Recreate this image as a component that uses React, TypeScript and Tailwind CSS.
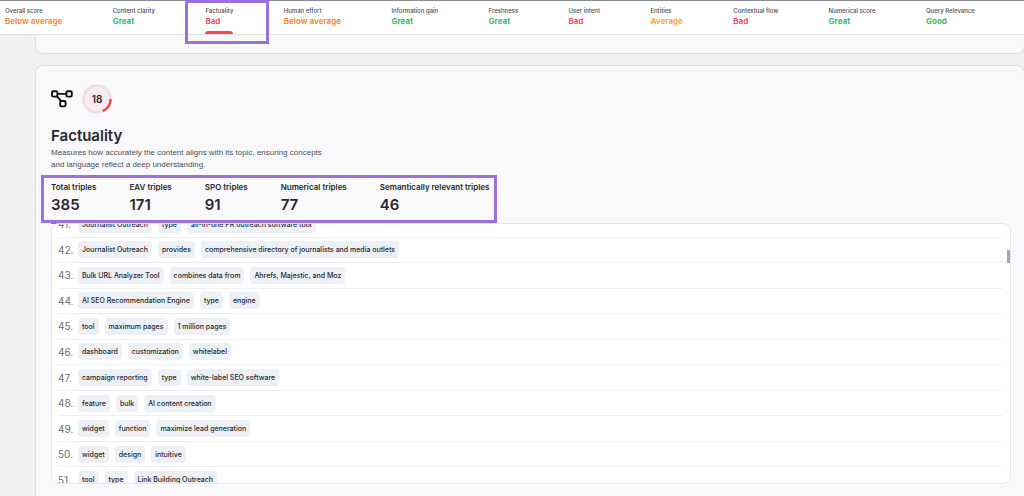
const scores = [
  { label: "Overall score", value: "Below average", color: "text-[#fb8c3c]" },
  { label: "Content clarity", value: "Great", color: "text-[#2cc25f]" },
  { label: "Factuality", value: "Bad", color: "text-[#f5505a]", active: true },
  { label: "Human effort", value: "Below average", color: "text-[#fb8c3c]" },
  { label: "Information gain", value: "Great", color: "text-[#2cc25f]" },
  { label: "Freshness", value: "Great", color: "text-[#2cc25f]" },
  { label: "User intent", value: "Bad", color: "text-[#f5505a]" },
  { label: "Entities", value: "Average", color: "text-[#f5a93b]" },
  { label: "Contextual flow", value: "Bad", color: "text-[#f5505a]" },
  { label: "Numerical score", value: "Great", color: "text-[#2cc25f]" },
  { label: "Query Relevance", value: "Good", color: "text-[#2cc25f]" },
];

const stats = [
  { label: "Total triples", value: 385, active: true },
  { label: "EAV triples", value: 171 },
  { label: "SPO triples", value: 91 },
  { label: "Numerical triples", value: 77 },
  { label: "Semantically relevant triples", value: 46 },
];

const triples = [
  ["Journalist Outreach", "type", "all-in-one PR outreach software tool"],
  ["Journalist Outreach", "provides", "comprehensive directory of journalists and media outlets"],
  ["Bulk URL Analyzer Tool", "combines data from", "Ahrefs, Majestic, and Moz"],
  ["AI SEO Recommendation Engine", "type", "engine"],
  ["tool", "maximum pages", "1 million pages"],
  ["dashboard", "customization", "whitelabel"],
  ["campaign reporting", "type", "white-label SEO software"],
  ["feature", "bulk", "AI content creation"],
  ["widget", "function", "maximize lead generation"],
  ["widget", "design", "intuitive"],
  ["tool", "type", "Link Building Outreach"],
];

function ScoreBar() {
  return (
    <nav className="flex h-[35px] shrink-0 justify-between border-t border-b border-t-[#8b8e90] border-b-[#dedfe1] bg-white pr-[49px] pl-[5px]">
      {scores.map((s) => (
        <a key={s.label} href="#factuality" className="relative block pt-[6px] whitespace-nowrap">
          <span className="block text-[6px] leading-[8px] font-medium text-[#4a4d52]">{s.label}</span>
          <span className={`block text-[8px] leading-[12px] font-bold ${s.color}`}>{s.value}</span>
          {s.active && (
            <>
              <span className="absolute inset-x-0 bottom-0 h-[3px] rounded-t-sm bg-[#f54848]" />
              <span className="pointer-events-none absolute -top-px -right-9 -bottom-[10px] -left-5 z-10 border-3 border-[#9a6fe0]" />
            </>
          )}
        </a>
      ))}
    </nav>
  );
}

function TripleIcon() {
  return (
    <svg width="22" height="18" viewBox="0 0 22 18" fill="none" stroke="#0d0e10" strokeWidth="1.9" aria-hidden="true">
      <rect x="1" y="1.2" width="5.4" height="5.4" rx="1.3" />
      <rect x="15.4" y="1.2" width="5.4" height="5.4" rx="1.3" />
      <rect x="9.2" y="11" width="5.4" height="5.4" rx="1.3" />
      <path d="M6.4 3.9h9M5.8 6.2l4.4 5" />
    </svg>
  );
}

function ScoreRing() {
  return (
    <svg width="30" height="30" viewBox="0 0 30 30" role="img" aria-label="Score 18">
      <circle cx="15" cy="15" r="13.5" fill="#faeced" stroke="#e8dfec" strokeWidth="2.4" />
      <path d="M28.5 15A13.5 13.5 0 0 1 20.8 27.2" fill="none" stroke="#f54848" strokeWidth="2.4" />
      <text x="15" y="18.6" textAnchor="middle" fontSize="10" fontWeight="600" fill="#26282c">
        18
      </text>
    </svg>
  );
}

export default function App() {
  return (
    <div className="flex h-screen flex-col overflow-hidden bg-[#f0f0f2] font-['Inter',sans-serif] text-[#26282c]">
      <ScoreBar />
      <main className="-mr-px flex flex-col gap-[11px] pl-[35px]">
        <div className="h-[19px] rounded-b-lg border border-t-0 border-[#dfe0e3] bg-[#f8f9fb]" />
        <section
          id="factuality"
          className="flex flex-col rounded-t-lg border border-b-0 border-[#dfe0e3] bg-[#f9f9fb] pt-[18px] pr-[13px] pb-8 pl-[15px]"
        >
          <div className="flex items-center gap-[9px]">
            <TripleIcon />
            <ScoreRing />
          </div>
          <h2 className="mt-[13px] text-[15px] leading-[18px] font-semibold">Factuality</h2>
          <p className="mt-[2px] font-['Liberation_Sans',sans-serif] text-[8px] leading-[12px] text-[#4c5058]">
            Measures how accurately the content aligns with its topic, ensuring concepts
            <br />
            and language reflect a deep understanding.
          </p>
          <div className="relative mt-[11px] flex gap-[33px] self-start whitespace-nowrap">
            {stats.map((s) => (
              <button key={s.label} type="button" className="relative block text-left">
                <span className="block text-[8px] leading-[10px] font-semibold">{s.label}</span>
                <span className="mt-[4px] block text-[15px] leading-[18px] font-semibold">{s.value}</span>
                {s.active && <span className="absolute inset-x-0 -bottom-[10px] h-px bg-[#5b7fe6]" />}
              </button>
            ))}
            <span className="pointer-events-none absolute -top-[7px] -right-2 -bottom-[9px] -left-[10px] z-10 border-3 border-[#9a6fe0]" />
          </div>
          <div className="relative mt-[9px] h-[261px] overflow-hidden rounded-lg border border-[#e6e7ea] bg-white">
            <ol className="-mt-3 mr-2 ml-[6px] grid h-[281px] auto-rows-fr">
              {triples.map((parts, i) => (
                <li key={i} className="flex items-center border-b border-[#eeeff1]">
                  <span className="w-5 text-[10px] leading-[12px] text-[#6a6e76]">{41 + i}.</span>
                  <span className="flex gap-[6px]">
                    {parts.map((p) => (
                      <span
                        key={p}
                        className="rounded-sm bg-[#edf0f4] px-1 py-[3px] text-[7px] leading-[11px] font-medium text-[#26282c]"
                      >
                        {p}
                      </span>
                    ))}
                  </span>
                </li>
              ))}
            </ol>
            <span className="absolute top-[26px] right-0 h-[13px] w-[3px] bg-[#a6a8ab]" />
          </div>
        </section>
      </main>
    </div>
  );
}
